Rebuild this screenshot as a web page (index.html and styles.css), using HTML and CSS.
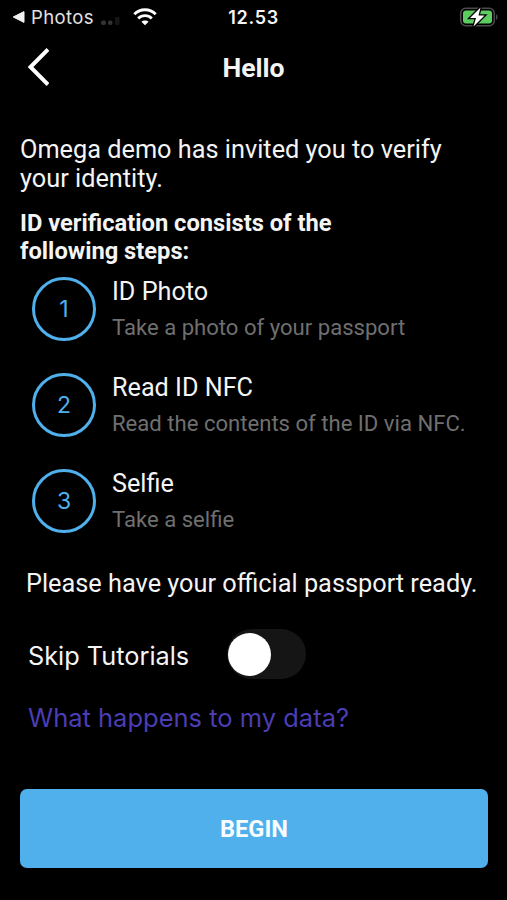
FILE: index.html
```html
<!DOCTYPE html>
<html lang="en">
<head>
<meta charset="utf-8">
<title>Hello</title>
<link rel="stylesheet" href="styles.css">
</head>
<body>
<div class="status">
  <div class="status-left">
    <svg class="back-app" width="14" height="14" viewBox="0 0 14 14"><path d="M1.200 7 12 1.600v10.800z" fill="#f2f2f2" stroke="#f2f2f2" stroke-linejoin="round"/></svg>
    <span class="app-name">Photos</span>
    <svg class="signal" width="20" height="10" viewBox="0 0 20 10"><g fill="#343434"><rect x="0" y="4.500" width="5" height="4.500" rx="2"/><rect x="7" y="4.500" width="4.500" height="4.500" rx="2"/></g><rect x="14" y="1" width="4.500" height="8" rx="1" fill="#161616"/></svg>
    <svg class="wifi" width="24" height="18" viewBox="0 0 24 18"><g fill="none" stroke="#fff" stroke-width="2.900"><path d="M1.300 6.200C7.300.200 16.700.200 22.700 6.200"/><path d="M5.200 10.500C9 6.700 15 6.700 18.800 10.500"/></g><path d="M12 17.300 8.400 13.800C10.400 11.900 13.600 11.900 15.600 13.800z" fill="#fff"/></svg>
  </div>
  <span class="time">12.53</span>
  <svg class="battery" width="40" height="22" viewBox="0 0 40 22"><rect x="1.700" y="2.200" width="33.600" height="17.600" rx="5" fill="none" stroke="#4b4b4b" stroke-width="1.500"/><rect x="4" y="4.500" width="29" height="13" rx="3" fill="#5ccb60"/><path d="M37 8.200c2 .6 2 5 0 5.600z" fill="#4b4b4b"/><path d="M21.500 1.500 11 12H17L14.500 20.500 25.500 9.500H19.500z" fill="#fff" stroke="#000" stroke-width="2.600" paint-order="stroke"/></svg>
</div>
<header class="nav">
  <svg class="back" width="24" height="40" viewBox="0 0 24 40"><path d="M23 1.500 5.500 19 23 36.500" fill="none" stroke="#fff" stroke-width="4"/></svg>
  <h1>Hello</h1>
</header>
<main>
  <p class="intro">Omega demo has invited you to verify<br>your identity.</p>
  <h2>ID verification consists of the<br>following steps:</h2>
  <ol class="steps">
    <li><span class="num">1</span><div><h3>ID Photo</h3><p>Take a photo of your passport</p></div></li>
    <li><span class="num">2</span><div><h3>Read ID NFC</h3><p>Read the contents of the ID via NFC.</p></div></li>
    <li><span class="num">3</span><div><h3>Selfie</h3><p>Take a selfie</p></div></li>
  </ol>
  <p class="ready">Please have your official passport ready.</p>
  <div class="skip"><span class="skip-label">Skip Tutorials</span><span class="toggle" role="switch" aria-checked="false"></span></div>
  <a class="data">What happens to my data?</a>
  <button class="begin">BEGIN</button>
</main>
</body>
</html>
```
FILE: styles.css
```css
* { box-sizing: border-box; margin: 0; padding: 0; }
body { width: 507px; height: 900px; overflow: hidden; background: #000; color: #f4f4f4; font-family: Roboto, sans-serif; white-space: nowrap; }
.status { display: grid; grid-template-columns: 1fr auto 1fr; align-items: center; height: 34px; padding: 0 8px 0 12px; font: 600 18px/22px Inter, sans-serif; }
.status-left { display: flex; align-items: center; }
.app-name { margin-left: 5px; font-weight: 400; font-size: 18.5px; letter-spacing: .4px; color: #e2e2e2; width: 63px; }
.signal { margin: 7px 0 0 7px; }
.wifi { margin-left: 12px; }
.time { padding-top: 1px; margin-left: -4px; letter-spacing: .7px; }
.battery { justify-self: end; }
.nav { display: grid; grid-template-columns: 1fr auto 1fr; align-items: center; height: 67px; padding: 0 25px; }
.nav h1 { font-size: 26.6px; line-height: 30px; font-weight: 700; }
main { padding: 34px 20px 0; }
.intro { font-size: 25.3px; line-height: 29px; }
h2 { margin-top: 16px; font-size: 23.7px; line-height: 28px; font-weight: 700; }
.steps { list-style: none; margin-top: 12px; padding-left: 12px; }
.steps li { display: flex; gap: 16px; height: 96px; }
.num { display: flex; align-items: center; justify-content: center; width: 64px; height: 64px; border: 3px solid #50b0ec; border-radius: 50%; color: #50b0ec; font: 400 23px/28px Inter, sans-serif; }
.steps h3 { font-size: 25.2px; line-height: 30px; font-weight: 400; }
.steps p { margin-top: 7px; font-size: 22.1px; line-height: 26px; color: #6f6f6f; }
.ready { margin: 4px 0 0 6px; font-size: 25.3px; line-height: 30px; }
.skip { display: flex; align-items: center; height: 50px; margin: 30px 0 0 8px; font: 400 25.3px/30px Inter, sans-serif; }
.skip-label { width: 199px; padding-top: 3px; }
.toggle { display: flex; align-items: center; width: 79px; height: 50px; padding-left: 1px; border-radius: 25px; background: #151515; }
.toggle::before { content: ""; width: 43px; height: 43px; border-radius: 50%; background: #fff; }
.data { display: block; margin: 24px 0 0 8px; font: 400 25.5px/30px Inter, sans-serif; color: #4b3db4; }
.begin { display: block; width: 468px; height: 79px; margin-top: 56px; border: 0; border-radius: 7px; background: #50b0ec; color: #f8fcff; font: 700 23.6px/28px Roboto, sans-serif; }
```
